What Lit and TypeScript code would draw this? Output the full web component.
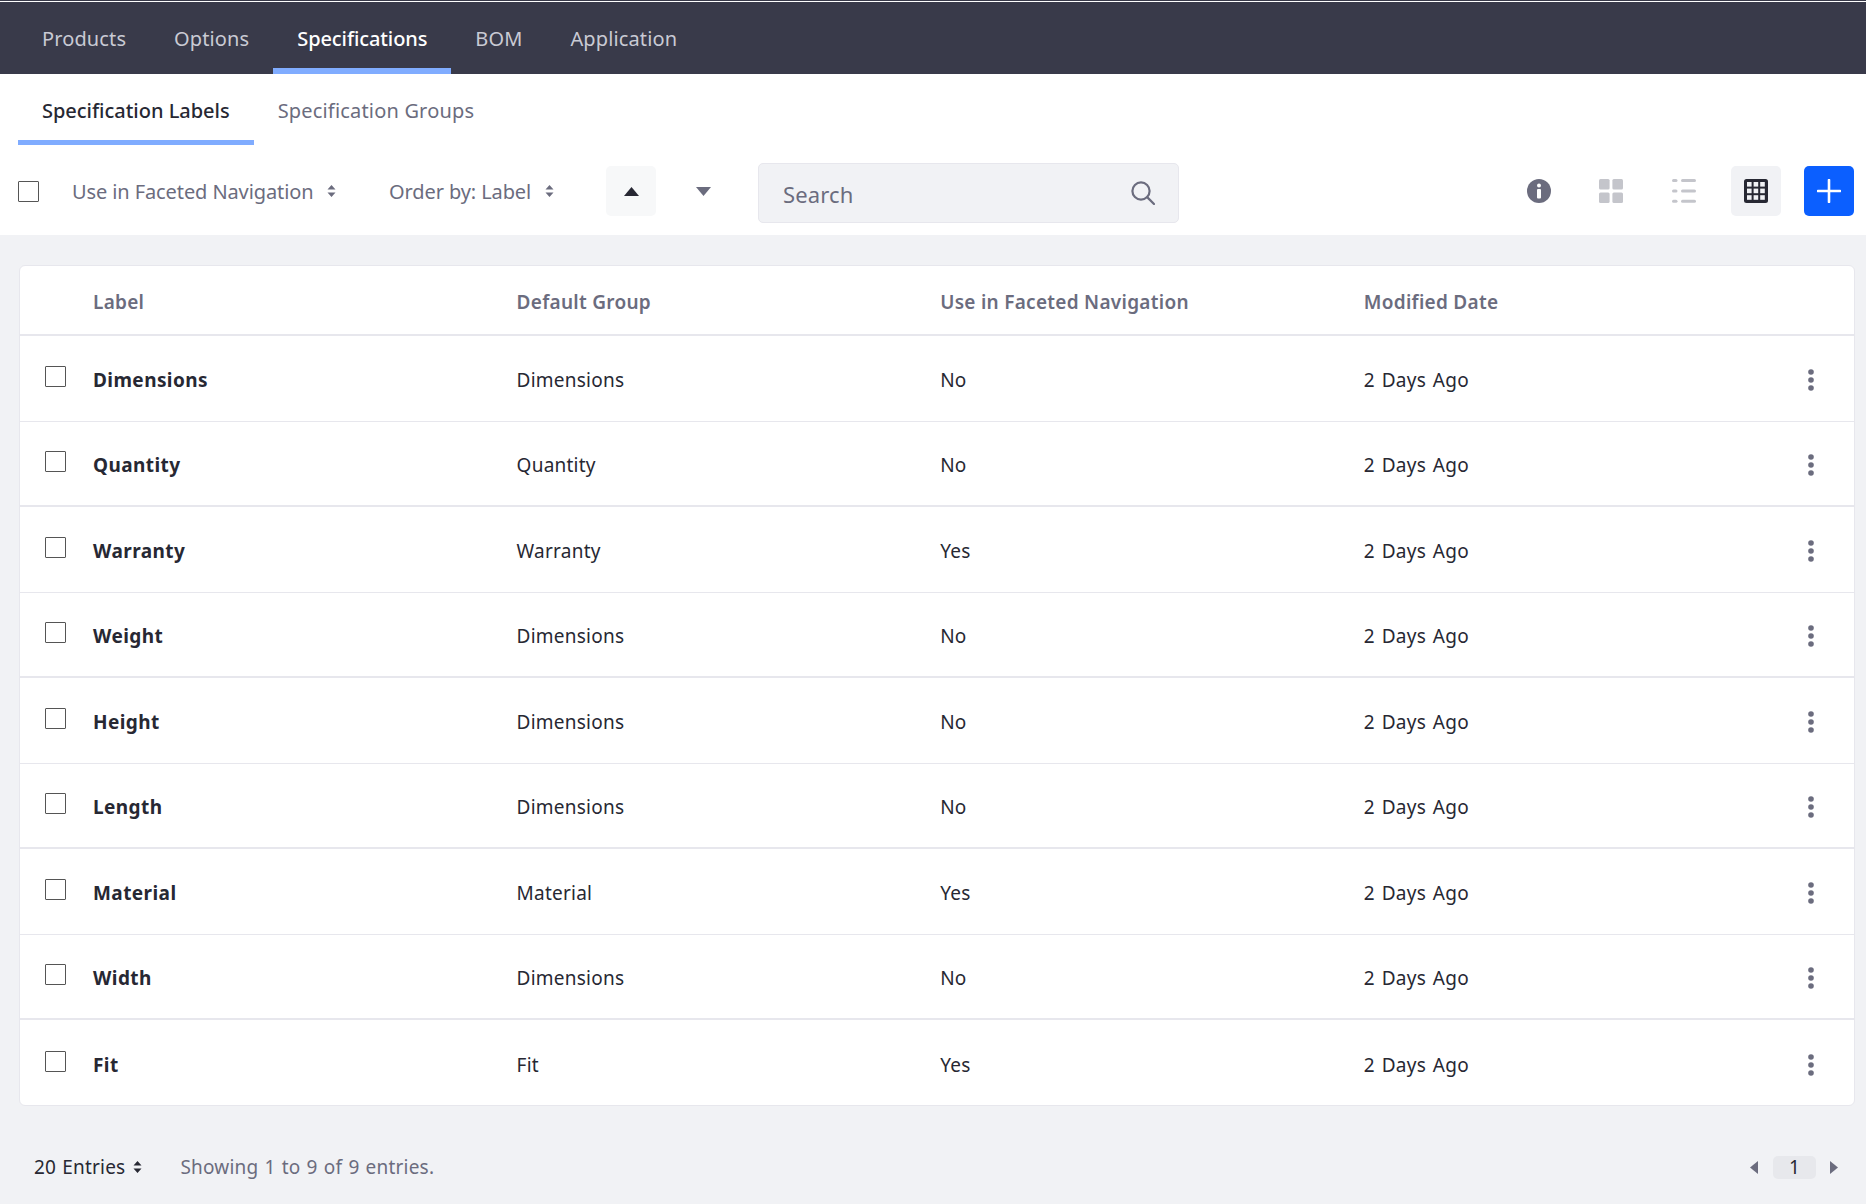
import { LitElement, html, css, svg } from "lit";
import { customElement } from "lit/decorators.js";

type Row = { label: string; group: string; faceted: string };

const ROWS: Row[] = [
  { label: "Dimensions", group: "Dimensions", faceted: "No" },
  { label: "Quantity", group: "Quantity", faceted: "No" },
  { label: "Warranty", group: "Warranty", faceted: "Yes" },
  { label: "Weight", group: "Dimensions", faceted: "No" },
  { label: "Height", group: "Dimensions", faceted: "No" },
  { label: "Length", group: "Dimensions", faceted: "No" },
  { label: "Material", group: "Material", faceted: "Yes" },
  { label: "Width", group: "Dimensions", faceted: "No" },
  { label: "Fit", group: "Fit", faceted: "Yes" },
];

const updown = html`<svg class="updown" width="9" height="14" viewBox="0 0 9 14">
  <path d="M4.5 1 8.5 5.5H.5zM4.5 13 .5 8.5h8z" fill="currentColor"></path>
</svg>`;

const kebab = html`<svg width="6" height="22" viewBox="0 0 6 22">
  <circle cx="3" cy="3" r="2.8" fill="#6b6c7e"></circle>
  <circle cx="3" cy="11" r="2.8" fill="#6b6c7e"></circle>
  <circle cx="3" cy="19" r="2.8" fill="#6b6c7e"></circle>
</svg>`;

const cells = (n: number) => {
  const out = [];
  for (let y = 0; y < n; y++) {
    for (let x = 0; x < n; x++) out.push([x, y]);
  }
  return out;
};

@customElement("app-root")
export class AppRoot extends LitElement {
  static override styles = css`
    :host {
      display: block;
      min-height: 1204px;
      background: #f1f2f5;
      font-family: "Noto Sans", "Open Sans", sans-serif;
      font-size: 19px;
      color: #272833;
    }

    .nav {
      display: flex;
      height: 72px;
      margin-top: 2px;
      padding: 0 18px;
      background: #393a4a;
      box-shadow: 0 -1px 0 #fff, 0 -2px 0 #393a4a;
    }
    .nav a {
      display: flex;
      align-items: center;
      padding: 6px 24px 0;
      color: #c9cad4;
      border-bottom: 6px solid transparent;
      box-sizing: border-box;
      font-size: 20px;
      letter-spacing: 0.12px;
    }
    .nav a.active {
      color: #fff;
      font-weight: 500;
      letter-spacing: -0.1px;
      border-bottom-color: #80acff;
    }

    .white {
      background: #fff;
      height: 161px;
    }
    .tabs {
      display: flex;
      height: 71px;
      padding-left: 18px;
    }
    .tabs a {
      display: flex;
      align-items: center;
      padding: 6px 24px 0;
      color: #6b6c7e;
      border-bottom: 5px solid transparent;
      box-sizing: border-box;
      font-size: 20px;
      letter-spacing: 0.18px;
    }
    .tabs a.active {
      color: #272833;
      font-weight: 500;
      letter-spacing: -0.02px;
      border-bottom-color: #80acff;
    }

    .toolbar {
      display: flex;
      align-items: center;
      height: 90px;
      padding: 2px 12.5px 0 18px;
      box-sizing: border-box;
      color: #6b6c7e;
    }
    .box {
      display: block;
      box-sizing: border-box;
      width: 21px;
      height: 21px;
      background: #fff;
      border: 1.5px solid #555;
      border-radius: 1px;
    }
    .filter {
      display: flex;
      align-items: center;
      gap: 14px;
      font-size: 20px;
      letter-spacing: -0.1px;
    }
    .filter.first {
      margin-left: 33px;
    }
    .filter.second {
      margin-left: 52.5px;
    }
    .sort {
      display: flex;
      align-items: center;
      justify-content: center;
      width: 50px;
      height: 50px;
      border-radius: 5px;
    }
    .sort.up {
      margin-left: 52px;
      background: #f7f8f9;
    }
    .sort.down {
      margin-left: 22px;
    }
    .search {
      display: flex;
      align-items: center;
      justify-content: space-between;
      width: 421px;
      height: 60px;
      margin: 4px 0 0 30px;
      padding: 0 23px 0 24px;
      box-sizing: border-box;
      background: #f1f2f5;
      border: 1px solid #e7e7ed;
      border-radius: 5px;
      font-size: 22px;
      letter-spacing: 0.1px;
    }
    .search span {
      padding-top: 2px;
    }
    .actions {
      display: flex;
      align-items: center;
      gap: 22.5px;
      margin-left: auto;
    }
    .icon-btn {
      display: flex;
      align-items: center;
      justify-content: center;
      width: 50px;
      height: 50px;
      border-radius: 5px;
    }
    .icon-btn.selected {
      background: #f1f2f5;
    }
    .icon-btn.primary {
      background: #0b5fff;
    }

    .card {
      margin: 30px 11px 0 19px;
      background: #fff;
      border: 1px solid #e7e7ed;
      border-radius: 6px;
      overflow: hidden;
    }
    .grid {
      display: grid;
      grid-template-columns: 73px 423.6px 423.6px 423.6px 1fr 60px;
      align-items: center;
    }
    .head {
      height: 70px;
      border-bottom: 2px solid #e7e7ed;
      color: #6b6c7e;
      font-weight: 600;
      letter-spacing: 0.28px;
      padding-top: 3px;
      box-sizing: border-box;
    }
    .row {
      height: 85.5px;
      padding-top: 4px;
      box-sizing: border-box;
      border-bottom: 1px solid #e7e7ed;
      letter-spacing: 0.23px;
    }
    .row:nth-child(odd) {
      border-bottom-width: 2px;
    }
    .row:last-child {
      height: 85px;
      border-bottom: 0;
    }
    .row .box {
      margin: -7px 0 0 25px;
    }
    .row strong {
      font-weight: 700;
      letter-spacing: 0.42px;
    }
    .date {
      word-spacing: 1.7px;
    }
    .kebab {
      display: flex;
      justify-content: center;
      padding-right: 27px;
    }

    .foot {
      display: flex;
      align-items: center;
      height: 98px;
      padding: 24px 28px 0 34px;
      box-sizing: border-box;
      color: #6b6c7e;
      letter-spacing: 0.2px;
      word-spacing: 1px;
    }
    .entries {
      display: flex;
      align-items: center;
      gap: 8px;
      color: #272833;
      margin-right: 38px;
    }
    .pager {
      display: flex;
      align-items: center;
      margin-left: auto;
    }
    .page {
      width: 43px;
      height: 23px;
      margin: 0 14px 0 15px;
      line-height: 23px;
      text-align: center;
      background: #e7e8ec;
      border-radius: 5px;
      color: #272833;
    }
  `;

  private _infoIcon() {
    return html`<svg width="24" height="24" viewBox="0 0 24 24">
      <circle cx="12" cy="12" r="12" fill="#6b6c7e"></circle>
      <circle cx="12" cy="6.5" r="2" fill="#fff"></circle>
      <rect x="10" y="10" width="4" height="9.5" rx="1" fill="#fff"></rect>
    </svg>`;
  }

  private _cardsIcon() {
    return html`<svg width="24" height="24" viewBox="0 0 24 24" fill="#c4c5cb">
      ${cells(2).map(
        ([x, y]) => svg`<rect x=${x * 13.4} y=${y * 13.4} width="10.6" height="10.6" rx="1.5"></rect>`,
      )}
    </svg>`;
  }

  private _listIcon() {
    return html`<svg width="24" height="24" viewBox="0 0 24 24" fill="#c4c5cb">
      ${[0, 10.4, 20.8].map(
        (y) => svg`<rect x="0" y=${y} width="5.5" height="3" rx="1.5"></rect>
          <rect x="9" y=${y} width="15" height="3" rx="1.5"></rect>`,
      )}
    </svg>`;
  }

  private _tableIcon() {
    return html`<svg width="24" height="24" viewBox="0 0 24 24">
      <rect width="24" height="24" rx="2.5" fill="#272833"></rect>
      ${cells(3).map(
        ([x, y]) =>
          svg`<rect x=${3 + x * 6.6} y=${3 + y * 6.6} width="4.6" height="4.6" fill="#f1f2f5"></rect>`,
      )}
    </svg>`;
  }

  override render() {
    return html`
      <nav class="nav">
        <a>Products</a>
        <a>Options</a>
        <a class="active">Specifications</a>
        <a>BOM</a>
        <a>Application</a>
      </nav>
      <div class="white">
        <div class="tabs">
          <a class="active">Specification Labels</a>
          <a>Specification Groups</a>
        </div>
        <div class="toolbar">
          <span class="box"></span>
          <span class="filter first">Use in Faceted Navigation ${updown}</span>
          <span class="filter second">Order by: Label ${updown}</span>
          <span class="sort up">
            <svg width="15" height="9" viewBox="0 0 15 9"><path d="M7.5 0 15 9H0z" fill="#272833"></path></svg>
          </span>
          <span class="sort down">
            <svg width="15" height="9" viewBox="0 0 15 9"><path d="M7.5 9 15 0H0z" fill="#6b6c7e"></path></svg>
          </span>
          <div class="search">
            <span>Search</span>
            <svg width="24" height="24" viewBox="0 0 24 24" fill="none" stroke="#6b6c7e" stroke-width="2.2" stroke-linecap="round">
              <circle cx="10" cy="10" r="8.6"></circle>
              <path d="M16.4 16.4 23 23"></path>
            </svg>
          </div>
          <div class="actions">
            <span class="icon-btn">${this._infoIcon()}</span>
            <span class="icon-btn">${this._cardsIcon()}</span>
            <span class="icon-btn">${this._listIcon()}</span>
            <span class="icon-btn selected">${this._tableIcon()}</span>
            <span class="icon-btn primary">
              <svg width="24" height="24" viewBox="0 0 24 24" stroke="#fff" stroke-width="2.6" stroke-linecap="round">
                <path d="M12 1v22M1 12h22"></path>
              </svg>
            </span>
          </div>
        </div>
      </div>
      <div class="card">
        <div class="grid head">
          <span></span>
          <span>Label</span>
          <span>Default Group</span>
          <span>Use in Faceted Navigation</span>
          <span>Modified Date</span>
          <span></span>
        </div>
        ${ROWS.map(
          (r) => html`<div class="grid row">
            <span class="box"></span>
            <strong>${r.label}</strong>
            <span>${r.group}</span>
            <span>${r.faceted}</span>
            <span class="date">2 Days Ago</span>
            <span class="kebab">${kebab}</span>
          </div>`,
        )}
      </div>
      <div class="foot">
        <span class="entries">20 Entries ${updown}</span>
        <span>Showing 1 to 9 of 9 entries.</span>
        <div class="pager">
          <svg width="8" height="13" viewBox="0 0 8 13"><path d="M8 0V13L0 6.5z" fill="#6b6c7e"></path></svg>
          <span class="page">1</span>
          <svg width="8" height="13" viewBox="0 0 8 13"><path d="M0 0V13L8 6.5z" fill="#6b6c7e"></path></svg>
        </div>
      </div>
    `;
  }
}
